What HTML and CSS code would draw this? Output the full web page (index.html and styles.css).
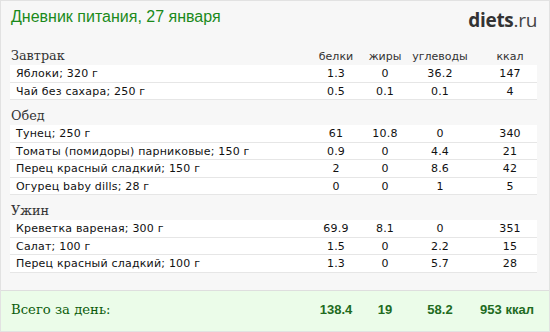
FILE: index.html
```html
<!DOCTYPE html>
<html lang="ru">
<head>
<meta charset="utf-8">
<title>Дневник питания</title>
<link rel="stylesheet" href="styles.css">
</head>
<body>
<div class="page">
  <div class="topbar">
    <h1 class="title">Дневник питания, 27 января</h1>
    <div class="logo"><b>diets</b>.ru</div>
  </div>

  <div class="section">
    <div class="row head">
      <div class="meal">Завтрак</div>
      <div class="col">белки</div>
      <div class="col">жиры</div>
      <div class="col">углеводы</div>
      <div class="col kcal">ккал</div>
    </div>
    <div class="row item"><div class="name">Яблоки; 320 г</div><div class="col">1.3</div><div class="col">0</div><div class="col">36.2</div><div class="col kcal">147</div></div>
    <div class="row item"><div class="name">Чай без сахара; 250 г</div><div class="col">0.5</div><div class="col">0.1</div><div class="col">0.1</div><div class="col kcal">4</div></div>
  </div>

  <div class="section">
    <div class="row head"><div class="meal">Обед</div></div>
    <div class="row item"><div class="name">Тунец; 250 г</div><div class="col">61</div><div class="col">10.8</div><div class="col">0</div><div class="col kcal">340</div></div>
    <div class="row item"><div class="name">Томаты (помидоры) парниковые; 150 г</div><div class="col">0.9</div><div class="col">0</div><div class="col">4.4</div><div class="col kcal">21</div></div>
    <div class="row item"><div class="name">Перец красный сладкий; 150 г</div><div class="col">2</div><div class="col">0</div><div class="col">8.6</div><div class="col kcal">42</div></div>
    <div class="row item"><div class="name">Огурец baby dills; 28 г</div><div class="col">0</div><div class="col">0</div><div class="col">1</div><div class="col kcal">5</div></div>
  </div>

  <div class="section">
    <div class="row head"><div class="meal">Ужин</div></div>
    <div class="row item"><div class="name">Креветка вареная; 300 г</div><div class="col">69.9</div><div class="col">8.1</div><div class="col">0</div><div class="col kcal">351</div></div>
    <div class="row item"><div class="name">Салат; 100 г</div><div class="col">1.5</div><div class="col">0</div><div class="col">2.2</div><div class="col kcal">15</div></div>
    <div class="row item"><div class="name">Перец красный сладкий; 100 г</div><div class="col">1.3</div><div class="col">0</div><div class="col">5.7</div><div class="col kcal">28</div></div>
  </div>

  <div class="footer">
    <div class="row total">
      <div class="total-label">Всего за день:</div>
      <div class="col">138.4</div>
      <div class="col">19</div>
      <div class="col">58.2</div>
      <div class="col kcal">953 ккал</div>
    </div>
  </div>
</div>
</body>
</html>
```

FILE: styles.css
```css
html, body {
  margin: 0;
  padding: 0;
  background: #ffffff;
}

.page {
  width: 550px;
  height: 332px;
  box-sizing: border-box;
  border: 1px solid #e2e2e2;
  background: #f7f7f7;
  display: flex;
  flex-direction: column;
  font-family: "DejaVu Sans", Verdana, sans-serif;
}

.topbar {
  height: 39px;
  box-sizing: border-box;
  margin: 0 12px 0 9px;
  padding-top: 6px;
  display: flex;
  justify-content: space-between;
  align-items: flex-start;
}

.title {
  margin: 0;
  font-family: "Liberation Sans", Arial, sans-serif;
  font-weight: normal;
  font-size: 16px;
  line-height: 20px;
  color: #1b8a1b;
  padding-left: 1px;
}

.logo {
  font-family: "Open Sans", Lato, sans-serif;
  font-size: 19px;
  line-height: 20px;
  padding-top: 3px;
  color: #444;
  letter-spacing: -0.3px;
}

.logo b {
  color: #333;
  font-weight: 700;
}

.section {
  margin: 0 12px 0 9px;
}

.row {
  display: grid;
  grid-template-columns: 1fr 50px 48px 62px 66px;
}

.head {
  height: 25px;
  box-sizing: border-box;
  padding-top: 7px;
  align-items: baseline;
}

.meal {
  font-family: "DejaVu Serif", Georgia, serif;
  font-size: 12.8px;
  line-height: 17px;
  color: #333;
  padding-left: 1px;
}

.head .col {
  font-size: 11px;
  color: #333;
  text-align: center;
}

.item {
  height: 17.5px;
  box-sizing: border-box;
  background: #ffffff;
  border-bottom: 1px solid #e6e6e6;
  font-size: 11px;
  line-height: 15px;
  padding-top: 1px;
  color: #111;
  letter-spacing: 0.2px;
}

.name {
  padding-left: 6px;
  white-space: nowrap;
}

.col {
  text-align: center;
}

.kcal {
  padding-left: 12px;
}

.footer {
  margin-top: auto;
  height: 41px;
  box-sizing: border-box;
  border-top: 1px solid #dedede;
  background: #ebfce9;
  padding: 10px 12px 0 10px;
}

.total {
  align-items: baseline;
}

.total-label {
  font-family: "DejaVu Serif", Georgia, serif;
  font-size: 13.2px;
  line-height: 18px;
  color: #0c5c0c;
}

.total .col {
  font-family: "Liberation Sans", Arial, sans-serif;
  font-weight: bold;
  font-size: 13px;
  color: #216b21;
}

.total .kcal {
  padding-left: 6px;
}
```
